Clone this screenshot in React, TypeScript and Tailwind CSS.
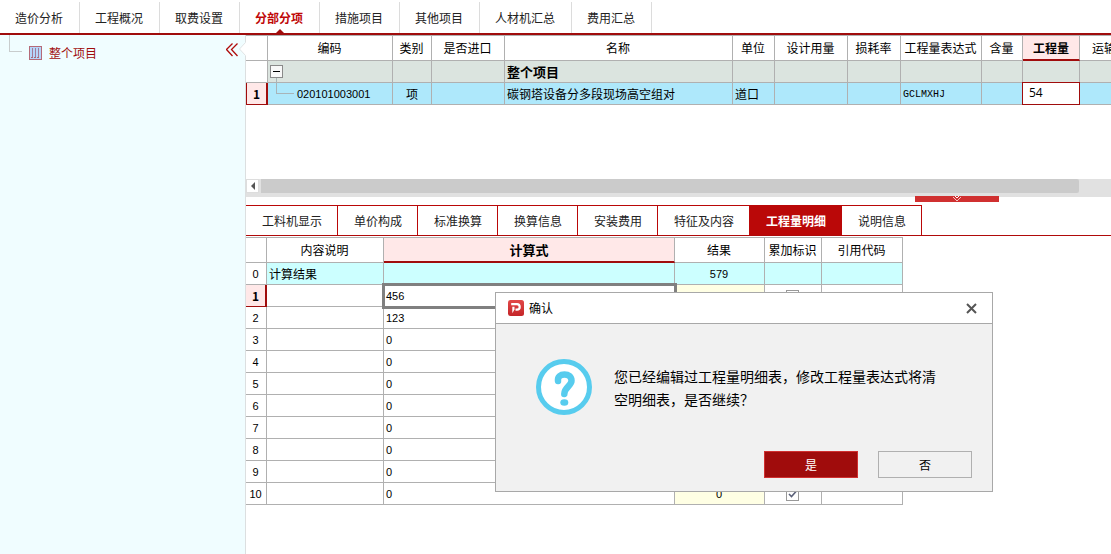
import React from 'react';

const NAV_TABS = ['造价分析', '工程概况', '取费设置', '分部分项', '措施项目', '其他项目', '人材机汇总', '费用汇总'];

const DETAIL_TABS = ['工料机显示', '单价构成', '标准换算', '换算信息', '安装费用', '特征及内容', '工程量明细', '说明信息'];

const BILL_COLUMNS = [
  { title: '编码', width: 'w-[125px]' },
  { title: '类别', width: 'w-[39px]' },
  { title: '是否进口', width: 'w-[73px]' },
  { title: '名称', width: 'w-[228px]' },
  { title: '单位', width: 'w-[42px]' },
  { title: '设计用量', width: 'w-[73px]' },
  { title: '损耗率', width: 'w-[53px]' },
  { title: '工程量表达式', width: 'w-[81px]' },
  { title: '含量', width: 'w-[41px]' },
  { title: '工程量', width: 'w-[57px]', active: true },
  { title: '运输', width: 'w-[50px]' },
];

const DETAIL_ROWS = ['456', '123', '0', '0', '0', '0', '0', '0', '0', '0'];

const CELL = 'h-[22px] border-r border-b border-[#b0b0b0] p-0';
const HEAD = 'h-[25px] border-r border-b border-[#b0b0b0] p-0 pr-px font-normal';
const HEAD_ACTIVE = 'h-[25px] border-r border-b-2 border-r-[#b0b0b0] border-b-[#a00c0c] bg-[#ffe8e8] p-0 font-bold';
const NUM = "pt-0.5 font-['Liberation_Sans','Noto_Sans_CJK_SC',sans-serif] text-[11px]";

const TopNav: React.FC = () => (
  <nav className="flex h-[35px] shrink-0 border-b-2 border-[#a00c0c] pt-0.5">
    {NAV_TABS.map((tab) => (
      <button
        key={tab}
        className={
          tab === '分部分项'
            ? 'relative border-r border-[#dcdcdc] pr-4 pl-[15px] font-bold text-[#c00808]'
            : 'border-r border-[#dcdcdc] pr-4 pl-[15px] text-[#222222]'
        }
      >
        {tab}
        {tab === '分部分项' && (
          <svg className="absolute bottom-0 left-9 h-1 w-2" viewBox="0 0 8 4">
            <path d="M4 0L8 4H0z" fill="#a00c0c" />
          </svg>
        )}
      </button>
    ))}
  </nav>
);

const Sidebar: React.FC = () => (
  <aside className="relative w-[246px] shrink-0 border-r border-[#dcdfe0] bg-[#f0fdff]">
    <div className="flex items-start">
      <div className="ml-[9px] h-[17px] w-[13px] border-b border-l border-[#c8cccd]"></div>
      <svg className="mt-[11px] ml-[7px] h-[14px] w-[13px]" viewBox="0 0 13 14" shapeRendering="crispEdges">
        <rect x="0.5" y="0.5" width="12" height="13" fill="#b5d5fa" stroke="#b56a78" />
        <path d="M3.5 2v9M6.5 2v9M9.5 2v9" stroke="#a47a98" />
        <path d="M2 11.5h2M5 11.5h2M8 11.5h2" stroke="#a86878" />
      </svg>
      <a href="#project" className="mt-2 ml-[7px] leading-5 text-[#a00c0c]">整个项目</a>
    </div>
    <button aria-label="收起" className="absolute top-2 left-[226px]">
      <svg className="h-[14px] w-3" viewBox="0 0 12 14" fill="none" stroke="#b00c0c">
        <path d="M6.5 0.5L0.5 6.5L6.5 13M11.5 0.5L5.5 6.5L11.5 13" strokeWidth="1.3" />
      </svg>
    </button>
    <svg className="absolute top-[7px] left-[239px] h-[14px] w-[7px]" viewBox="0 0 7 14">
      <path d="M7 0L0.5 7L7 14z" fill="#ffffff" />
      <path d="M6.5 0.5L0.5 7L6.5 13.5" fill="none" stroke="#e0e4e5" />
    </svg>
  </aside>
);

const BillTable: React.FC = () => (
  <div className="h-36 shrink-0 overflow-hidden">
    <table className="w-[884px] table-fixed border-separate border-spacing-0 border-t border-[#b0b0b0]">
      <thead>
        <tr>
          <th className={`${HEAD} w-[22px]`}></th>
          {BILL_COLUMNS.map((col) => (
            <th key={col.title} className={`${col.active ? HEAD_ACTIVE : HEAD} ${col.width} whitespace-nowrap`}>
              {col.title}
            </th>
          ))}
        </tr>
      </thead>
      <tbody>
        <tr className="bg-[#dbe4df]">
          <td className={`${CELL} bg-white`}></td>
          <td className={`${CELL} relative`}>
            <svg className="absolute top-1 left-0.5 h-[38px] w-6" viewBox="0 0 24 38" shapeRendering="crispEdges">
              <path d="M6.5 13v15.500h17" fill="none" stroke="#a8b4b8" />
              <rect x="0.5" y="0.5" width="12" height="12" fill="#f8f8f8" stroke="#8a8a8a" />
              <path d="M3 6.500h7" stroke="#000000" />
            </svg>
          </td>
          <td className={CELL}></td>
          <td className={CELL}></td>
          <td className={`${CELL} pl-0.5 text-[13px] font-bold`}>整个项目</td>
          <td className={CELL}></td>
          <td className={CELL}></td>
          <td className={CELL}></td>
          <td className={CELL}></td>
          <td className={CELL}></td>
          <td className={CELL}></td>
          <td className={CELL}></td>
        </tr>
        <tr className="bg-[#aee8fb]">
          <td className="h-[22px] border-r-2 border-b border-l border-[#a00c0c] bg-[#ffe8e8] p-0 text-center font-bold">1</td>
          <td className={`${CELL} ${NUM} pl-[29px]`}>020101003001</td>
          <td className={`${CELL} text-center`}>项</td>
          <td className={CELL}></td>
          <td className={`${CELL} pl-0.5`}>碳钢塔设备分多段现场高空组对</td>
          <td className={`${CELL} pl-0.5`}>道口</td>
          <td className={CELL}></td>
          <td className={CELL}></td>
          <td className={`${CELL} pt-0.5 pl-0.5 font-['Liberation_Mono',monospace] text-[10px]`}>GCLMXHJ</td>
          <td className={CELL}></td>
          <td className={CELL}>
            <input
              aria-label="工程量"
              defaultValue="54"
              className="block h-[21px] w-full bg-white pb-0.5 pl-1.5 font-['Open_Sans',sans-serif] text-xs outline outline-[#a00c0c]"
            />
          </td>
          <td className={CELL}></td>
        </tr>
      </tbody>
    </table>
  </div>
);

const ScrollStrip: React.FC = () => (
  <div className="relative h-[18px] shrink-0 bg-[#e1e1e1] pb-1">
    <div className="flex h-[14px] gap-0.5">
      <button aria-label="向左滚动" className="flex w-[13px] items-center justify-center border border-[#dddddd] bg-white">
        <svg className="h-2 w-1" viewBox="0 0 4 8">
          <path d="M4 0v8L0 4z" fill="#555555" />
        </svg>
      </button>
      <div className="mr-8 flex-1 rounded-r-xs bg-[#cbcbcb]"></div>
    </div>
    <button aria-label="折叠" className="absolute right-28 -bottom-[5px] flex h-1.5 w-[84px] justify-center bg-[#d03030]">
      <svg className="h-1.5 w-2.5" viewBox="0 0 10 6" fill="none" stroke="#f3c4c4">
        <path d="M3 0L5 2L7 0" stroke="#ffffff" />
        <path d="M1 1L5 5L9 1" />
      </svg>
    </button>
  </div>
);

const DetailTabs: React.FC = () => (
  <div className="mt-2 flex h-[31px] shrink-0 border-b border-[#b00a0a]">
    {DETAIL_TABS.map((tab) => (
      <button
        key={tab}
        className={
          tab === '工程量明细'
            ? 'border-t border-r border-[#ba0808] bg-[#ba0808] pl-4 pr-[15px] font-bold text-white'
            : 'border-t border-r border-[#ba0808] pl-4 pr-[15px] text-[#222222]'
        }
      >
        {tab}
      </button>
    ))}
  </div>
);

const CheckMark: React.FC<{ row: number }> = ({ row }) => (
  <span className="relative mx-auto block h-[13px] w-[13px]">
    <input
      type="checkbox"
      defaultChecked
      aria-label={`累加标识 ${row}`}
      className="block h-[13px] w-[13px] appearance-none border border-[#999999] bg-white"
    />
    <svg className="pointer-events-none absolute top-0 left-0 h-[13px] w-[13px]" viewBox="0 0 13 13" fill="none">
      <path d="M3 6L5.500 8.500L10 3.500" stroke="#5a6078" strokeWidth="1.6" />
    </svg>
  </span>
);

const DetailTable: React.FC = () => (
  <table className="mt-px w-[657px] table-fixed border-separate border-spacing-0 border-t border-[#b0b0b0]">
    <thead>
      <tr>
        <th className={`${HEAD} w-[21px]`}></th>
        <th className={`${HEAD} w-[117px]`}>内容说明</th>
        <th className={`${HEAD_ACTIVE} w-[291px] text-[13px]`}>计算式</th>
        <th className={`${HEAD} w-[90px]`}>结果</th>
        <th className={`${HEAD} w-[57px] whitespace-nowrap`}>累加标识</th>
        <th className={`${HEAD} w-[81px]`}>引用代码</th>
      </tr>
    </thead>
    <tbody>
      <tr className="bg-[#ccffff]">
        <td className={`${CELL} ${NUM} bg-white pr-px text-center`}>0</td>
        <td className={`${CELL} pl-0.5`}>计算结果</td>
        <td className={CELL}></td>
        <td className={`${CELL} ${NUM} pr-px text-center`}>579</td>
        <td className={CELL}></td>
        <td className={CELL}></td>
      </tr>
      {DETAIL_ROWS.map((value, index) => (
        <tr key={index}>
          {index === 0 ? (
            <td className="h-[22px] border-r-2 border-b border-[#a00c0c] bg-[#ffe8e8] p-0 text-center font-bold">1</td>
          ) : (
            <td className={`${CELL} ${NUM} pr-px text-center`}>{index + 1}</td>
          )}
          <td className={CELL}></td>
          <td className={`${CELL} ${NUM} pl-0.5 ${index === 0 ? 'relative outline-3 -outline-offset-1 outline-[#808080]' : ''}`}>
            {value}
          </td>
          <td className={`${CELL} ${NUM} bg-[#ffffe4] pr-px text-center`}>{value}</td>
          <td className={`${CELL} pt-px pr-0.5`}>
            <CheckMark row={index + 1} />
          </td>
          <td className={CELL}></td>
        </tr>
      ))}
    </tbody>
  </table>
);

const ConfirmDialog: React.FC = () => (
  <div
    role="dialog"
    aria-labelledby="confirm-title"
    className="absolute top-[292px] left-[495px] w-[498px] border border-[#a8a8a8] bg-[#f1f1f1]"
  >
    <div className="flex h-[31px] items-center border-b border-[#a8a8a8] bg-white pr-[15px] pl-3">
      <svg className="h-4 w-4" viewBox="0 0 16 16">
        <defs>
          <linearGradient id="logo-red" x1="0" y1="0" x2="0" y2="1">
            <stop offset="0" stopColor="#e24848" />
            <stop offset="1" stopColor="#c42528" />
          </linearGradient>
        </defs>
        <rect width="16" height="16" rx="2.500" fill="url(#logo-red)" />
        <path d="M3.200 4.200H9a2.700 2.700 0 0 1 0 5.400H7.500" fill="none" stroke="#ffffff" strokeWidth="2.200" />
        <path d="M4.300 6.800H6.500V9.500L4.300 13.200z" fill="#ffffff" />
      </svg>
      <h2 id="confirm-title" className="ml-[5px] flex-1">确认</h2>
      <button aria-label="关闭">
        <svg className="h-[11px] w-[11px]" viewBox="0 0 11 11" fill="none">
          <path d="M1 1L10 10M10 1L1 10" stroke="#555555" strokeWidth="2" />
        </svg>
      </button>
    </div>
    <div className="flex pt-[35px] pl-10">
      <svg className="h-14 w-14 shrink-0" viewBox="0 0 56 56" fill="none">
        <circle cx="28" cy="28" r="25.500" fill="#ffffff" stroke="#57ccee" strokeWidth="5" />
        <path d="M22 22C21.500 17.500 24.500 15.500 28.500 15.500S35.500 17.500 35.500 21.800C35.500 27 28.500 28 28.300 35" stroke="#57ccee" strokeWidth="6.500" strokeLinecap="round" />
        <ellipse cx="28.300" cy="43.500" rx="4" ry="3.200" fill="#57ccee" />
      </svg>
      <p className="mt-1.5 ml-[22px] w-[322px] text-sm leading-[23px]">
        您已经编辑过工程量明细表，修改工程量表达式将清空明细表，是否继续？
      </p>
    </div>
    <div className="mt-9 flex justify-end gap-5 pr-5 pb-[13px]">
      <button className="h-[27px] w-[94px] border border-[#d03030] bg-[#a00c0c] text-white">是</button>
      <button className="h-[27px] w-[94px] border border-[#b0b0b0] bg-[#f1f1f1]">否</button>
    </div>
  </div>
);

const App: React.FC = () => {
  return (
    <div className="relative flex h-screen flex-col overflow-hidden bg-white font-['Noto_Sans_CJK_SC',sans-serif] text-xs text-black">
      <TopNav />
      <div className="flex min-h-0 flex-1">
        <Sidebar />
        <main className="flex min-w-0 flex-1 flex-col">
          <BillTable />
          <ScrollStrip />
          <DetailTabs />
          <DetailTable />
        </main>
      </div>
      <ConfirmDialog />
    </div>
  );
};

export default App;
